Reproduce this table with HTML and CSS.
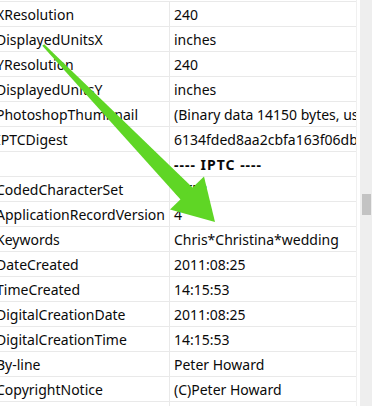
FILE: index.html
```html
<!DOCTYPE html>
<html>
<head>
<meta charset="utf-8">
<link rel="stylesheet" href="styles.css">
</head>
<body>
<div class="view">
  <div class="grid">
    <div class="row"><div class="key">XResolution</div><div class="val">240</div></div>
    <div class="row"><div class="key">DisplayedUnitsX</div><div class="val">inches</div></div>
    <div class="row"><div class="key">YResolution</div><div class="val">240</div></div>
    <div class="row"><div class="key">DisplayedUnitsY</div><div class="val">inches</div></div>
    <div class="row"><div class="key">PhotoshopThumbnail</div><div class="val">(Binary data 14150 bytes, use -b option to extract)</div></div>
    <div class="row"><div class="key">IPTCDigest</div><div class="val">6134fded8aa2cbfa163f06dbbc7e2a1f</div></div>
    <div class="row"><div class="key"></div><div class="val bold">---- IPTC ----</div></div>
    <div class="row"><div class="key">CodedCharacterSet</div><div class="val">UTF8</div></div>
    <div class="row"><div class="key">ApplicationRecordVersion</div><div class="val">4</div></div>
    <div class="row"><div class="key">Keywords</div><div class="val">Chris*Christina*wedding</div></div>
    <div class="row"><div class="key">DateCreated</div><div class="val">2011:08:25</div></div>
    <div class="row"><div class="key">TimeCreated</div><div class="val">14:15:53</div></div>
    <div class="row"><div class="key">DigitalCreationDate</div><div class="val">2011:08:25</div></div>
    <div class="row"><div class="key">DigitalCreationTime</div><div class="val">14:15:53</div></div>
    <div class="row"><div class="key">By-line</div><div class="val">Peter Howard</div></div>
    <div class="row"><div class="key">CopyrightNotice</div><div class="val">(C)Peter Howard</div></div>
    <div class="row"><div class="key"></div><div class="val"></div></div>
  </div>
  <div class="scrollbar"><div class="thumb"></div></div>
  <svg class="arrow" width="372" height="406" viewBox="0 0 372 406">
    <polygon class="shaft" points="42.3,45.7 44.2,44.3 193,188 181,200"/>
    <polygon class="head" points="215,222 204,176.5 170,209.5"/>
  </svg>
</div>
</body>
</html>
```

FILE: styles.css
```css
html, body {
  margin: 0;
  padding: 0;
  background: #ffffff;
}

.view {
  position: relative;
  display: flex;
  width: 372px;
  height: 406px;
  overflow: hidden;
}

.grid {
  width: 361px;
  margin-left: -4px;
  padding-top: 1px;
  font-family: "Noto Sans", "Open Sans", sans-serif;
  font-size: 14px;
  color: #0a0a0a;
  border-right: 1px solid #f0f0f0;
  box-sizing: border-box;
}

.row {
  display: flex;
  height: 25px;
  border-top: 1px solid #e9e9e9;
  box-sizing: border-box;
}

.key {
  width: 173px;
  flex: none;
  border-right: 1px solid #e9e9e9;
  padding-top: 1px;
  line-height: 23px;
  white-space: nowrap;
  overflow: hidden;
}

.val {
  flex: 1;
  padding-left: 4px;
  padding-top: 1px;
  line-height: 23px;
  white-space: nowrap;
  overflow: hidden;
}

.bold {
  font-weight: 700;
  letter-spacing: 1px;
}

.scrollbar {
  margin-left: 3px;
  width: 12px;
  background: #eeeeee;
  flex: none;
}

.thumb {
  margin-top: 194px;
  margin-left: 2px;
  width: 9px;
  height: 21px;
  background: #c3c3c3;
}

.arrow {
  position: absolute;
  left: 0;
  top: 0;
}

.shaft, .head {
  fill: #5fd625;
}
```
